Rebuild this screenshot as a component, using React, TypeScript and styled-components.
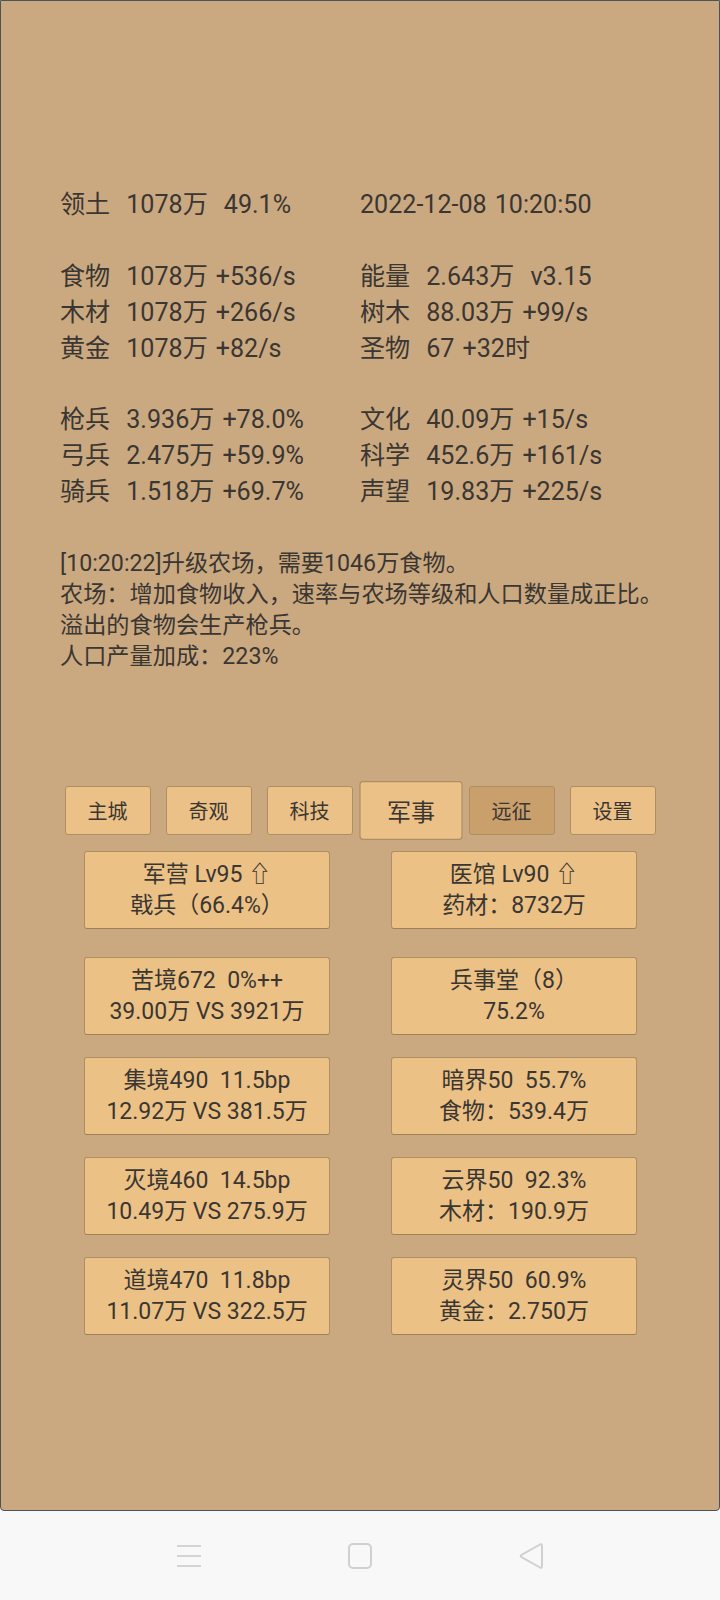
import React from "react";
import styled, { createGlobalStyle, css } from "styled-components";

const GlobalStyle = createGlobalStyle`
  html, body {
    margin: 0;
    padding: 0;
    background: #f8f8f8;
  }
  body {
    font-family: Roboto, "Noto Sans CJK SC", sans-serif;
    color: #3a3632;
  }
`;

const Screen = styled.div`
  width: 720px;
  height: 1600px;
  display: flex;
  flex-direction: column;
`;

const Panel = styled.div`
  box-sizing: border-box;
  height: 1511px;
  background: #caa981;
  border: 1px solid #4d535b;
  border-radius: 0 0 4px 4px;
  padding-top: 186px;
  display: flex;
  flex-direction: column;
`;

const StatGroup = styled.div`
  display: grid;
  grid-template-columns: 300px 1fr;
  padding-left: 59px;
  font-size: 25.1px;
  line-height: 35.9px;
  word-spacing: 1.8px;
  & + & {
    margin-top: 35.9px;
  }
`;

const Stat = styled.div`
  white-space: pre;
`;

const Log = styled.div`
  margin-top: 38px;
  padding-left: 59px;
  font-size: 23.2px;
  line-height: 30.8px;
`;

const Tabs = styled.div`
  display: flex;
  justify-content: center;
  gap: 15px;
  margin-top: 115px;
`;

const Tab = styled.div<{ $active?: boolean; $dim?: boolean }>`
  box-sizing: border-box;
  width: 86px;
  height: 49px;
  display: flex;
  align-items: center;
  justify-content: center;
  font-size: 20px;
  background: ${(p) => (p.$dim ? "#c99f6c" : "#ecc187")};
  border: 1px solid #b08e63;
  border-radius: 3px;
  ${(p) =>
    p.$active &&
    css`
      transform: scale(1.2);
    `}
`;

const Cards = styled.div`
  display: grid;
  grid-template-columns: 246px 246px;
  column-gap: 61px;
  row-gap: 22px;
  justify-content: center;
  margin-top: 16px;
  padding-left: 1px;
`;

const Card = styled.div<{ $first?: boolean }>`
  box-sizing: border-box;
  height: 78px;
  display: flex;
  flex-direction: column;
  align-items: center;
  justify-content: center;
  background: #ebc186;
  border: 1px solid #b08e63;
  border-bottom-color: #a08055;
  border-radius: 3px;
  font-size: 23px;
  line-height: 31px;
  white-space: pre;
  margin-bottom: ${(p) => (p.$first ? "6px" : "0")};
`;

const NavBar = styled.div`
  flex: 1;
  display: flex;
  align-items: center;
  justify-content: center;
  gap: 146px;
  background: #f8f8f8;
`;

const stats: [string, string][][] = [
  [["领土  1078万  49.1%", "2022-12-08 10:20:50"]],
  [
    ["食物  1078万 +536/s", "能量  2.643万  v3.15"],
    ["木材  1078万 +266/s", "树木  88.03万 +99/s"],
    ["黄金  1078万 +82/s", "圣物  67 +32时"],
  ],
  [
    ["枪兵  3.936万 +78.0%", "文化  40.09万 +15/s"],
    ["弓兵  2.475万 +59.9%", "科学  452.6万 +161/s"],
    ["骑兵  1.518万 +69.7%", "声望  19.83万 +225/s"],
  ],
];

const logLines = [
  "[10:20:22]升级农场，需要1046万食物。",
  "农场：增加食物收入，速率与农场等级和人口数量成正比。",
  "溢出的食物会生产枪兵。",
  "人口产量加成：223%",
];

const tabs = ["主城", "奇观", "科技", "军事", "远征", "设置"];

const cards: [string, string][] = [
  ["军营 Lv95 ⇧", "戟兵（66.4%）"],
  ["医馆 Lv90 ⇧", "药材：8732万"],
  ["苦境672  0%++", "39.00万 VS 3921万"],
  ["兵事堂（8）", "75.2%"],
  ["集境490  11.5bp", "12.92万 VS 381.5万"],
  ["暗界50  55.7%", "食物：539.4万"],
  ["灭境460  14.5bp", "10.49万 VS 275.9万"],
  ["云界50  92.3%", "木材：190.9万"],
  ["道境470  11.8bp", "11.07万 VS 322.5万"],
  ["灵界50  60.9%", "黄金：2.750万"],
];

const MenuIcon = () => (
  <svg width="26" height="24" viewBox="0 0 26 24">
    <g stroke="#d4d4d4" strokeWidth="2">
      <line x1="1" y1="2" x2="25" y2="2" />
      <line x1="1" y1="12" x2="25" y2="12" />
      <line x1="1" y1="22" x2="25" y2="22" />
    </g>
  </svg>
);

const HomeIcon = () => (
  <svg width="24" height="26" viewBox="0 0 24 26">
    <rect x="1" y="1" width="22" height="24" rx="4" fill="none" stroke="#d0d0d0" strokeWidth="2" />
  </svg>
);

const BackIcon = () => (
  <svg width="26" height="28" viewBox="0 0 26 28">
    <path
      d="M22 2.5 Q24 1.5 24 4 L24 24 Q24 26.5 22 25.5 L3.5 15.2 Q2 14 3.5 12.8 Z"
      fill="none"
      stroke="#d0d0d0"
      strokeWidth="2"
      strokeLinejoin="round"
    />
  </svg>
);

export default function App() {
  return (
    <Screen>
      <GlobalStyle />
      <Panel>
        {stats.map((group, gi) => (
          <StatGroup key={gi}>
            {group.map(([l, r], ri) => (
              <React.Fragment key={ri}>
                <Stat>{l}</Stat>
                <Stat>{r}</Stat>
              </React.Fragment>
            ))}
          </StatGroup>
        ))}
        <Log>
          {logLines.map((t) => (
            <div key={t}>{t}</div>
          ))}
        </Log>
        <Tabs>
          {tabs.map((t) => (
            <Tab key={t} $active={t === "军事"} $dim={t === "远征"}>
              {t}
            </Tab>
          ))}
        </Tabs>
        <Cards>
          {cards.map(([a, b], i) => (
            <Card key={i} $first={i < 2}>
              <div>{a}</div>
              <div>{b}</div>
            </Card>
          ))}
        </Cards>
      </Panel>
      <NavBar>
        <MenuIcon />
        <HomeIcon />
        <BackIcon />
      </NavBar>
    </Screen>
  );
}
